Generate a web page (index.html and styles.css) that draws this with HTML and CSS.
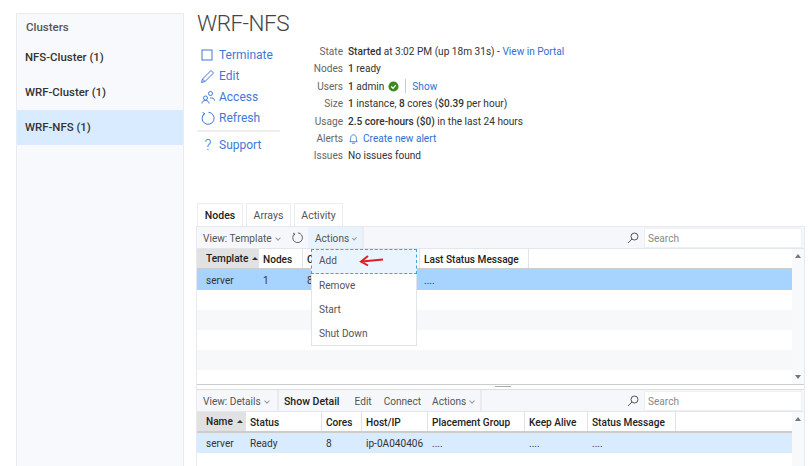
FILE: index.html
```html
<!DOCTYPE html>
<html lang="en">
<head>
    <title>WRF-NFS</title>
    <link rel="stylesheet" href="styles.css">
</head>
<body>
    <div class="sidebar">
        <div class="side-title">Clusters</div>
        <div class="side-item">NFS-Cluster (1)</div>
        <div class="side-item">WRF-Cluster (1)</div>
        <div class="side-item selected">WRF-NFS (1)</div>
    </div>

    <div class="main">
        <h1>WRF-NFS</h1>
        <div class="summary">
            <div class="commands">
                <div class="command">
                    <svg class="cmd-icon" viewBox="0 0 16 16"><rect x="2" y="3" width="10" height="10"/></svg>Terminate
                </div>
                <div class="command">
                    <svg class="cmd-icon" viewBox="0 0 16 16"><path d="M1.5 14.5l1-3.5 8.500-8.500 2.500 2.500-8.500 8.500zM2.500 11l2.500 2.500"/></svg>Edit
                </div>
                <div class="command">
                    <svg class="cmd-icon" viewBox="0 0 16 16"><circle cx="5.500" cy="9" r="2"/><path d="M2 14.500c0-2 1.500-3 3.500-3s3.500 1 3.500 3"/><circle cx="10.500" cy="4.500" r="2"/><path d="M10 9c2.500-.5 4.500.5 4.500 2.500"/></svg>Access
                </div>
                <div class="command">
                    <svg class="cmd-icon" viewBox="0 0 16 16"><path d="M4.500 3.500a6 6 0 1 0 4-1.200M2.500 2.500l2 1-1 2"/></svg>Refresh
                </div>
                <div class="command support">
                    <span class="cmd-icon question">?</span>Support
                </div>
            </div>
            <div class="details">
                <div class="detail"><span class="key">State</span><span><b>Started</b> at 3:02 PM (up 18m 31s) - <a>View in Portal</a></span></div>
                <div class="detail"><span class="key">Nodes</span><span><b>1</b> ready</span></div>
                <div class="detail"><span class="key">Users</span><span class="users"><span><b>1</b> admin</span>
                    <svg class="ok" viewBox="0 0 12 12"><circle cx="6" cy="6" r="5.500" fill="#3b8a1e"/><path d="M3.500 6l2 2 3-3.500" fill="none" stroke="#fff" stroke-width="1.400"/></svg>
                    <span class="divider"></span><a>Show</a></span></div>
                <div class="detail"><span class="key">Size</span><span><b>1</b> instance, <b>8</b> cores (<b>$0.39</b> per hour)</span></div>
                <div class="detail"><span class="key">Usage</span><span><b>2.5 core-hours ($0)</b> in the last 24 hours</span></div>
                <div class="detail"><span class="key">Alerts</span><span class="users">
                    <svg class="bell" viewBox="0 0 12 12"><path d="M2 9.500c1-1 .8-3 1-4.500.2-1.800 1.400-3 3-3s2.800 1.200 3 3c.2 1.500 0 3.500 1 4.500zM4.500 11.200h3"/></svg>
                    <a>Create new alert</a></span></div>
                <div class="detail"><span class="key">Issues</span><span>No issues found</span></div>
            </div>
        </div>

        <div class="tabs">
            <div class="tab tab-nodes active">Nodes</div>
            <div class="tab tab-arrays">Arrays</div>
            <div class="tab tab-activity">Activity</div>
        </div>

        <div class="panel">
            <div class="toolbar">
                <span class="tool view">View: Template<span class="caret"></span></span>
                <svg class="refresh-icon" viewBox="0 0 16 16"><path d="M4.500 3.500a6 6 0 1 0 4-1.200M2.500 2.500l2 1-1 2"/></svg>
                <span class="tool actions-open">Actions<span class="caret"></span></span>
                <span class="tool-sep"></span>
                <div class="search-box">
                    <svg class="search-icon" viewBox="0 0 12 12"><circle cx="7.500" cy="4.500" r="3.500"/><path d="M5 7l-4 4"/></svg>
                    <span class="search">Search</span>
                </div>
            </div>
            <div class="grid-area upper">
                <div class="grid">
                    <div class="row head cols-top">
                        <div class="cell sorted">Template<span class="sort"></span></div>
                        <div class="cell">Nodes</div>
                        <div class="cell">Cores</div>
                        <div class="cell">Last Status Message</div>
                    </div>
                    <div class="row cols-top hot">
                        <div class="cell">server</div>
                        <div class="cell">1</div>
                        <div class="cell">8</div>
                        <div class="cell">....</div>
                    </div>
                    <div class="row"></div>
                    <div class="row stripe"></div>
                    <div class="row"></div>
                    <div class="row stripe"></div>
                </div>
                <div class="scrollbar"><span class="arrow-up"></span><span class="arrow-down"></span></div>
            </div>

            <div class="menu">
                <div class="menu-item first"><span>Add</span>
                    <svg class="red-arrow" viewBox="0 0 26 12"><path d="M24 4.500L3 6.500M9 1L2 6.500l7 4" fill="none" stroke="#e51c23" stroke-width="2"/></svg>
                </div>
                <div class="menu-item">Remove</div>
                <div class="menu-item">Start</div>
                <div class="menu-item">Shut Down</div>
            </div>

            <div class="splitter"><span class="grip"></span></div>

            <div class="toolbar lower-bar">
                <span class="tool view small">View: Details<span class="caret"></span></span>
                <span class="tool-sep"></span>
                <span class="tool detail-btn"><b>Show Detail</b></span>
                <span class="tool">Edit</span>
                <span class="tool connect-btn">Connect</span>
                <span class="tool">Actions<span class="caret"></span></span>
                <span class="tool-sep"></span>
                <div class="search-box">
                    <svg class="search-icon" viewBox="0 0 12 12"><circle cx="7.500" cy="4.500" r="3.500"/><path d="M5 7l-4 4"/></svg>
                    <span class="search">Search</span>
                </div>
            </div>
            <div class="grid-area lower">
                <div class="grid">
                    <div class="row head cols-bottom">
                        <div class="cell sorted">Name<span class="sort"></span></div>
                        <div class="cell">Status</div>
                        <div class="cell">Cores</div>
                        <div class="cell">Host/IP</div>
                        <div class="cell">Placement Group</div>
                        <div class="cell">Keep Alive</div>
                        <div class="cell">Status Message</div>
                    </div>
                    <div class="row cols-bottom soft">
                        <div class="cell">server</div>
                        <div class="cell">Ready</div>
                        <div class="cell">8</div>
                        <div class="cell">ip-0A040406</div>
                        <div class="cell">....</div>
                        <div class="cell">....</div>
                        <div class="cell">....</div>
                    </div>
                </div>
                <div class="scrollbar"><span class="arrow-up"></span></div>
            </div>
        </div>
    </div>
</body>
</html>
```

FILE: styles.css
```css
* {
    box-sizing: border-box;
}
html, body {
    margin: 0;
    height: 466px;
    overflow: hidden;
}
body {
    display: flex;
    align-items: flex-start;
    padding: 13px 7px 0 16px;
    background-color: #fff;
    color: #333;
    font-family: Roboto, sans-serif;
    font-size: 10.100px;
}
a {
    color: #2f6fd0;
}
b {
    font-weight: 500;
}

/* clusters list */
.sidebar {
    width: 168px;
    height: 453px;
    margin-right: 13px;
    background-color: #f8f9fc;
    border: 1px solid #e8ebf0;
    border-bottom: none;
}
.side-title {
    height: 26px;
    padding: 6px 0 0 9px;
    color: #555;
    font-size: 11.500px;
    font-weight: 500;
}
.side-item {
    height: 35px;
    padding: 10px 0 0 8px;
    color: #333;
    font-size: 11.400px;
    font-weight: 500;
}
.selected {
    background-color: #d9ecff;
}

/* header */
.main {
    flex: 1;
    min-width: 0;
}
h1 {
    margin: -2px 0 0;
    height: 33px;
    color: #444;
    font-size: 22.500px;
    font-weight: 300;
    letter-spacing: -.5px;
    line-height: 24px;
}
.summary {
    display: flex;
    height: 159px;
}
.commands {
    width: 83px;
    color: #3f78d8;
    font-size: 12px;
}
.command {
    display: flex;
    align-items: center;
    height: 21px;
}
.cmd-icon {
    width: 16px;
    height: 16px;
    margin: 0 3px 0 3px;
    fill: none;
    stroke: #3f78d8;
    stroke-width: 1;
}
.question {
    text-align: center;
    font-size: 15px;
    font-weight: 300;
    line-height: 16px;
}
.support {
    height: 26px;
    margin-top: 2px;
    padding-top: 1px;
    border-top: 2px solid #eee;
}
.details {
    margin-left: 25px;
    margin-top: -1px;
}
.detail {
    display: flex;
    height: 17.400px;
    line-height: 17px;
}
.key {
    width: 38px;
    margin-right: 5px;
    color: #666;
    text-align: right;
}
.users {
    display: flex;
    align-items: center;
    gap: 4px;
}
.ok {
    width: 11px;
    height: 11px;
}
.divider {
    width: 1px;
    height: 14px;
    margin: 0 2px;
    background-color: #ccc;
}
.bell {
    width: 11px;
    height: 11px;
    fill: none;
    stroke: #3f78d8;
}

/* tabs */
.tabs {
    display: flex;
    gap: 3px;
    height: 23px;
}
.tab {
    padding-top: 5px;
    background-color: #fff;
    border: 1px solid #eaedf2;
    border-bottom: none;
    color: #555;
    font-size: 10.500px;
    text-align: center;
}
.tab-nodes {
    width: 46px;
}
.tab-arrays {
    width: 45px;
}
.tab-activity {
    width: 49px;
}
.active {
    color: #222;
    font-weight: 500;
}

/* panel */
.panel {
    position: relative;
    margin-left: -1px;
    border-top: 1px solid #e6e9ef;
    border-left: 1px solid #e6e9ef;
    border-right: 1px solid #e6e9ef;
}
.toolbar {
    display: flex;
    align-items: center;
    height: 22px;
    background-color: #f6f7fa;
    border-bottom: 1px solid #e3e6ec;
    color: #555;
}
.tool {
    display: flex;
    align-items: center;
    height: 100%;
    padding: 2px 6px 0;
}
.view {
    width: 88px;
    padding: 2px 0 0 6px;
}
.small {
    width: 80px;
}
.caret {
    width: 4px;
    height: 4px;
    margin: -2px 0 0 4px;
    border-right: 1px solid #999;
    border-bottom: 1px solid #999;
    transform: rotate(45deg);
}
.refresh-icon {
    width: 13px;
    height: 13px;
    margin: 0 4px 0 6px;
    fill: none;
    stroke: #444;
}
.actions-open {
    width: 54px;
    padding-left: 7px;
    background-color: #e9f3fb;
}
.tool-sep {
    width: 2px;
    height: 100%;
    background-color: #e9ebf0;
}
.detail-btn {
    margin-right: 3px;
    padding-left: 5px;
    color: #222;
    font-size: 10.500px;
}
.connect-btn {
    margin-right: -1px;
}
.search-box {
    display: flex;
    align-items: center;
    margin-left: auto;
}
.search-icon {
    width: 12px;
    height: 12px;
    margin-right: 5px;
    fill: none;
    stroke: #555;
}
.search {
    width: 158px;
    height: 20px;
    margin-right: 2px;
    padding: 4px 3px 0;
    background-color: #fff;
    border: 1px solid #eceff4;
    color: #888;
}

/* grids */
.grid-area {
    display: flex;
}
.upper {
    height: 135px;
}
.lower {
    height: 54px;
}
.grid {
    flex: 1;
    min-width: 0;
    overflow: hidden;
}
.scrollbar {
    display: flex;
    flex-direction: column;
    justify-content: space-between;
    align-items: center;
    width: 12px;
    padding: 5px 0;
    background-color: #f8f9fb;
}
.arrow-up, .arrow-down {
    width: 0;
    height: 0;
    border-left: 3.500px solid transparent;
    border-right: 3.500px solid transparent;
}
.arrow-up {
    border-bottom: 4px solid #777;
}
.arrow-down {
    border-top: 4px solid #777;
}
.row {
    height: 20px;
    line-height: 20px;
}
.stripe {
    background-color: #f7f8fa;
}
.head {
    height: 21px;
    border-bottom: 2px solid #ccc;
    color: #222;
    font-weight: 500;
}
.head .cell {
    border-right: 1px solid #dfe3ea;
}
.cols-top {
    display: grid;
    grid-template-columns: 62px 44px 117px 109px;
}
.cols-bottom {
    display: grid;
    grid-template-columns: 49px 76px 40px 66px 97px 63px 88px;
}
.cell {
    padding: 1px 4px 0;
    overflow: hidden;
    white-space: nowrap;
}
.row:not(.head) .cell:first-child {
    padding-left: 9px;
}
.sorted {
    display: flex;
    align-items: center;
    gap: 4px;
    padding-left: 9px;
    background-color: #e1e1e1;
}
.sort {
    width: 0;
    height: 0;
    margin-top: -1px;
    border-left: 3px solid transparent;
    border-right: 3px solid transparent;
    border-bottom: 3px solid #333;
}
.hot {
    background-color: #a6d3ff;
}
.soft {
    background-color: #d9ecff;
}

/* open actions menu */
.menu {
    position: absolute;
    top: 22px;
    left: 114px;
    width: 106px;
    height: 97px;
    background-color: #fff;
    border: 1px solid #e0e4ea;
    color: #555;
}
.menu-item {
    height: 24px;
    padding: 0 7px;
    line-height: 23px;
}
.first {
    display: flex;
    align-items: center;
    gap: 22px;
    margin: -1px -1px 0;
    height: 25px;
    padding: 0 7px 2px;
    background-color: #e9f4ff;
    border: 1px dashed #35a8de;
    color: #555;
}
.red-arrow {
    width: 26px;
    height: 12px;
}

.splitter {
    display: flex;
    justify-content: flex-end;
    height: 6px;
    padding-right: 293px;
    background-color: #fff;
    border-top: 1px solid #ccc;
    border-bottom: 1px solid #ddd;
}
.grip {
    width: 16px;
    height: 1px;
    margin-top: 1px;
    background-color: #aaa;
}
```
